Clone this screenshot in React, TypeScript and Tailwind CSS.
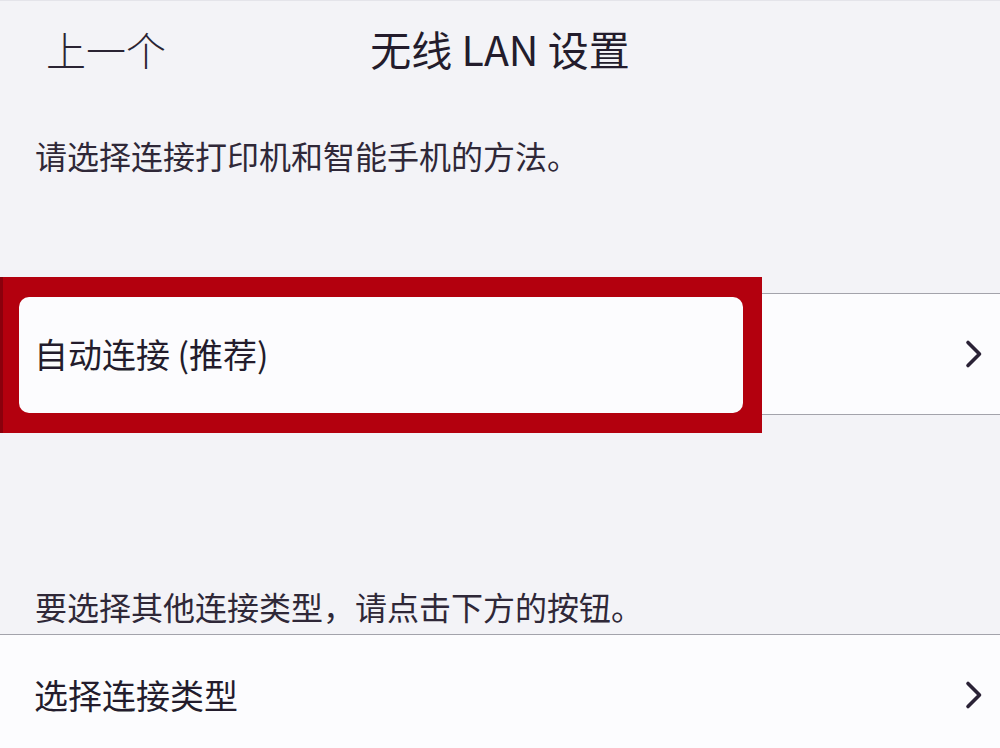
import { ReactNode } from "react"

const font = { fontFamily: '"Noto Sans CJK SC", "Noto Sans", sans-serif' }

function Chevron() {
  return (
    <svg width="20" height="30" viewBox="0 0 20 30" fill="none">
      <path d="M4 3.5 L15.5 15 L4 26.5" stroke="#2a2236" strokeWidth="3.6" strokeLinecap="round" strokeLinejoin="round" />
    </svg>
  )
}

function Row({ children }: { children: ReactNode }) {
  return (
    <div className="h-[120px] bg-[#fcfcfe] flex items-center justify-between pl-[34px] pr-[16px]">
      <span className="text-[34px] leading-[44px] font-normal text-[#231c2c]">{children}</span>
      <Chevron />
    </div>
  )
}

export default function App() {
  return (
    <div className="min-h-screen bg-[#f3f3f7] overflow-hidden" style={font}>
      <header className="relative h-24 flex items-center border-t border-[#e4e4ea]">
        <span className="pl-[46px] text-[40px] font-light text-[#2a2433]">上一个</span>
        <h1 className="absolute inset-x-0 text-center text-[41px] font-normal text-[#231c2c]">
          无线 LAN 设置
        </h1>
      </header>

      <div className="h-[197px] pt-[37px] pl-[35px]">
        <p className="text-[32px] leading-[44px] text-[#2f2838]">请选择连接打印机和智能手机的方法。</p>
      </div>

      <div className="relative border-y border-[#a3a3ab]">
        <Row>自动连接 (推荐)</Row>
        <div className="pointer-events-none absolute left-0 top-[-17px] w-[762px] h-[156px] overflow-hidden border-l-[3px] border-[#8a000c]">
          <div className="absolute left-[16px] right-[19px] top-[20px] bottom-[20px] rounded-[10px] shadow-[0_0_0_40px_#b3000e]" />
        </div>
      </div>

      <div className="h-[219px] flex items-end pb-[6px] pl-[35px]">
        <p className="text-[32px] leading-[44px] text-[#2f2838]">要选择其他连接类型，请点击下方的按钮。</p>
      </div>

      <div className="border-t border-[#a3a3ab]">
        <Row>选择连接类型</Row>
      </div>
    </div>
  )
}
